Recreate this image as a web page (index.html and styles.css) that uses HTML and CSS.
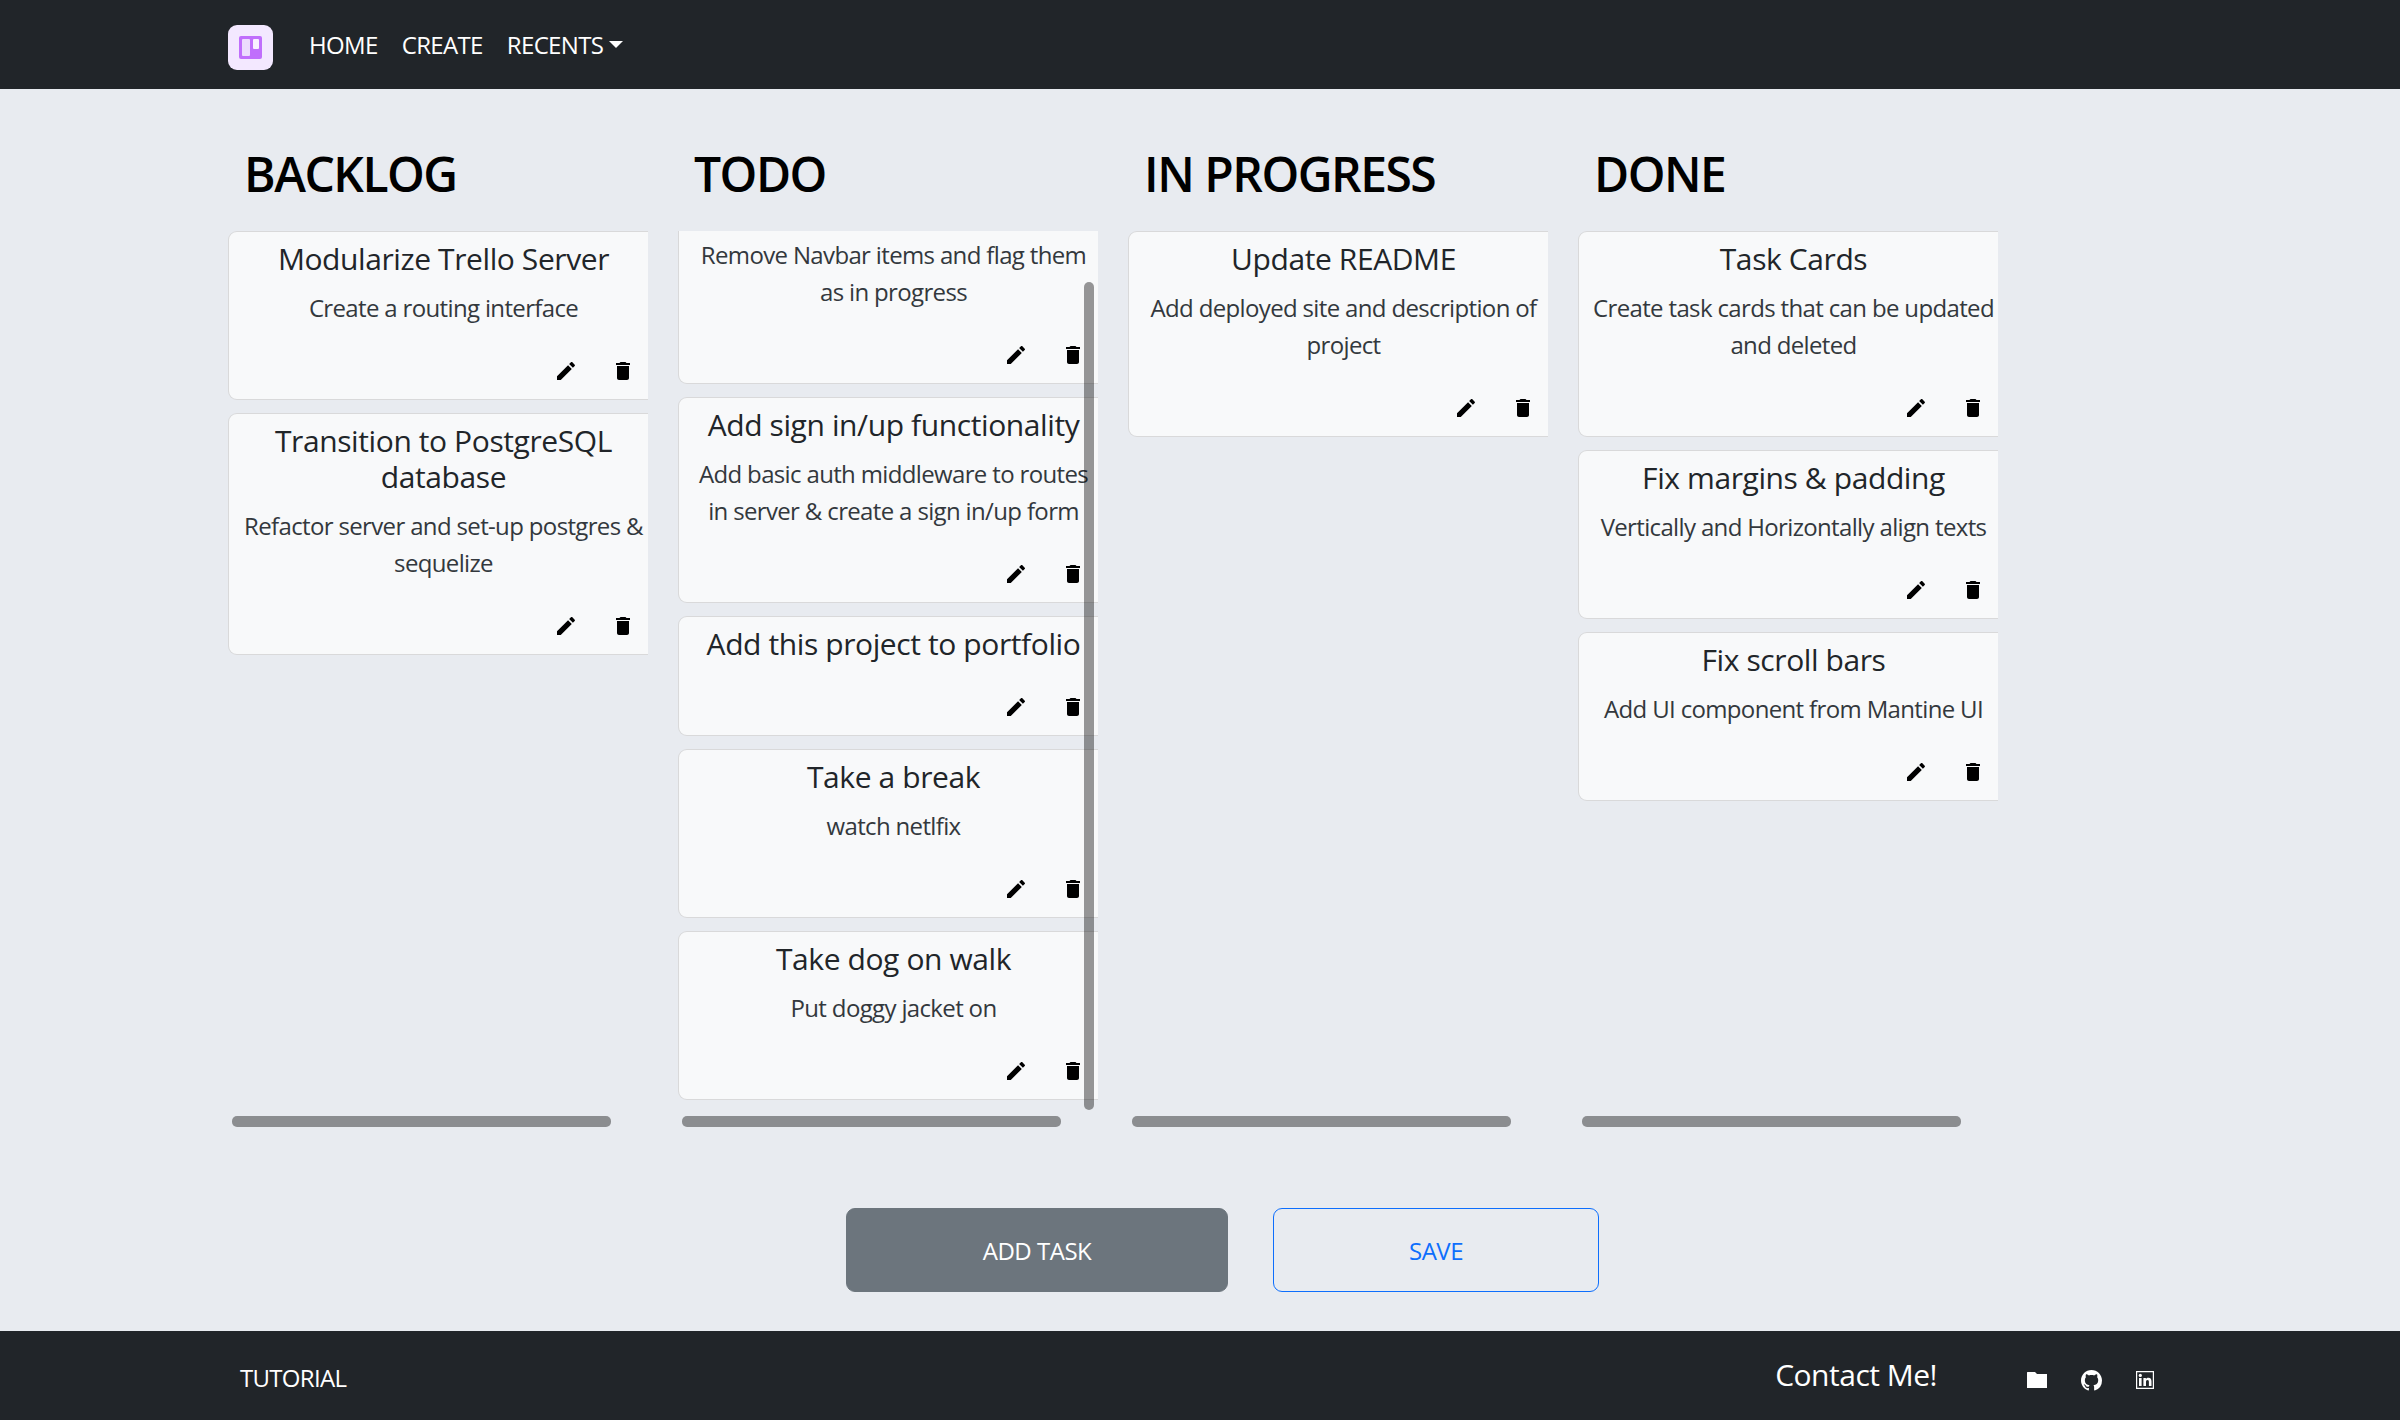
FILE: index.html
```html
<!DOCTYPE html>
<html lang="en">
<head>
  <meta charset="UTF-8" />
  <meta name="viewport" content="width=device-width, initial-scale=1.0" />
  <title>Trello Board</title>
  <link rel="stylesheet" href="styles.css">
</head>
<body>
  <svg class="icon-defs" aria-hidden="true">
    <symbol id="i-edit" viewBox="0 0 24 24"><path d="M3 17.25V21h3.75L17.81 9.94l-3.75-3.75L3 17.25zM20.71 7.04c.39-.39.39-1.02 0-1.41l-2.34-2.34c-.39-.39-1.02-.39-1.41 0l-1.83 1.83 3.75 3.75 1.83-1.83z"/></symbol>
    <symbol id="i-trash" viewBox="0 0 24 24"><path d="M6 19c0 1.1.9 2 2 2h8c1.1 0 2-.9 2-2V7H6v12zM19 4h-3.5l-1-1h-5l-1 1H5v2h14V4z"/></symbol>
  </svg>

  <nav class="navbar">
    <svg class="logo" viewBox="0 0 45 45">
      <rect width="45" height="45" rx="9" fill="#f3e8ff"/>
      <rect x="11" y="11" width="23" height="23" rx="2" fill="#c06efc"/>
      <rect x="14" y="14" width="8" height="17" rx="1" fill="#ecdcfd"/>
      <rect x="25" y="14" width="6" height="10" rx="1" fill="#f8f0ff"/>
    </svg>
    <a class="nav-link" href="#">HOME</a>
    <a class="nav-link" href="#">CREATE</a>
    <a class="nav-link dropdown-toggle" href="#">RECENTS</a>
  </nav>

  <main class="board">
    <section class="column">
      <h2 class="column-title">BACKLOG</h2>
      <div class="task-list">
        <article class="task">
          <h5 class="task-title">Modularize Trello Server</h5>
          <p class="task-desc">Create a routing interface</p>
          <div class="task-actions">
            <svg class="icon"><use href="#i-edit"/></svg>
            <svg class="icon"><use href="#i-trash"/></svg>
          </div>
        </article>
        <article class="task">
          <h5 class="task-title">Transition to PostgreSQL database</h5>
          <p class="task-desc">Refactor server and set-up postgres &amp; sequelize</p>
          <div class="task-actions">
            <svg class="icon"><use href="#i-edit"/></svg>
            <svg class="icon"><use href="#i-trash"/></svg>
          </div>
        </article>
      </div>
      <div class="hbar"></div>
    </section>

    <section class="column">
      <h2 class="column-title">TODO</h2>
      <div class="task-list">
        <!-- list is scrolled, top of this card is out of view -->
        <article class="task task-cut">
          <p class="task-desc">Remove Navbar items and flag them as in progress</p>
          <div class="task-actions">
            <svg class="icon"><use href="#i-edit"/></svg>
            <svg class="icon"><use href="#i-trash"/></svg>
          </div>
        </article>
        <article class="task">
          <h5 class="task-title">Add sign in/up functionality</h5>
          <p class="task-desc">Add basic auth middleware to routes in server &amp; create a sign in/up form</p>
          <div class="task-actions">
            <svg class="icon"><use href="#i-edit"/></svg>
            <svg class="icon"><use href="#i-trash"/></svg>
          </div>
        </article>
        <article class="task">
          <h5 class="task-title">Add this project to portfolio</h5>
          <p class="task-desc"></p>
          <div class="task-actions">
            <svg class="icon"><use href="#i-edit"/></svg>
            <svg class="icon"><use href="#i-trash"/></svg>
          </div>
        </article>
        <article class="task">
          <h5 class="task-title">Take a break</h5>
          <p class="task-desc">watch netlfix</p>
          <div class="task-actions">
            <svg class="icon"><use href="#i-edit"/></svg>
            <svg class="icon"><use href="#i-trash"/></svg>
          </div>
        </article>
        <article class="task">
          <h5 class="task-title">Take dog on walk</h5>
          <p class="task-desc">Put doggy jacket on</p>
          <div class="task-actions">
            <svg class="icon"><use href="#i-edit"/></svg>
            <svg class="icon"><use href="#i-trash"/></svg>
          </div>
        </article>
      </div>
      <div class="vbar"></div>
      <div class="hbar"></div>
    </section>

    <section class="column">
      <h2 class="column-title">IN PROGRESS</h2>
      <div class="task-list">
        <article class="task">
          <h5 class="task-title">Update README</h5>
          <p class="task-desc">Add deployed site and description of project</p>
          <div class="task-actions">
            <svg class="icon"><use href="#i-edit"/></svg>
            <svg class="icon"><use href="#i-trash"/></svg>
          </div>
        </article>
      </div>
      <div class="hbar"></div>
    </section>

    <section class="column">
      <h2 class="column-title">DONE</h2>
      <div class="task-list">
        <article class="task">
          <h5 class="task-title">Task Cards</h5>
          <p class="task-desc">Create task cards that can be updated and deleted</p>
          <div class="task-actions">
            <svg class="icon"><use href="#i-edit"/></svg>
            <svg class="icon"><use href="#i-trash"/></svg>
          </div>
        </article>
        <article class="task">
          <h5 class="task-title">Fix margins &amp; padding</h5>
          <p class="task-desc">Vertically and Horizontally align texts</p>
          <div class="task-actions">
            <svg class="icon"><use href="#i-edit"/></svg>
            <svg class="icon"><use href="#i-trash"/></svg>
          </div>
        </article>
        <article class="task">
          <h5 class="task-title">Fix scroll bars</h5>
          <p class="task-desc">Add UI component from Mantine UI</p>
          <div class="task-actions">
            <svg class="icon"><use href="#i-edit"/></svg>
            <svg class="icon"><use href="#i-trash"/></svg>
          </div>
        </article>
      </div>
      <div class="hbar"></div>
    </section>
  </main>

  <div class="button-row">
    <button class="btn btn-add">ADD TASK</button>
    <button class="btn btn-save">SAVE</button>
  </div>

  <footer class="footer">
    <a class="footer-link" href="#">TUTORIAL</a>
    <span class="contact">Contact Me!</span>
    <div class="footer-icons">
      <svg class="footer-icon" viewBox="0 0 24 24"><path d="M10 4H2.4L2 4.4V20h20V6H12z"/></svg>
      <svg class="footer-icon footer-icon-git" viewBox="0 0 16 16"><path d="M8 0C3.58 0 0 3.58 0 8c0 3.54 2.29 6.53 5.47 7.59.4.07.55-.17.55-.38 0-.19-.01-.82-.01-1.49-2.01.37-2.53-.49-2.69-.94-.09-.23-.48-.94-.82-1.13-.28-.15-.68-.52-.01-.53.63-.01 1.08.58 1.23.82.72 1.21 1.87.87 2.33.66.07-.52.28-.87.51-1.07-1.78-.2-3.64-.89-3.64-3.95 0-.87.31-1.59.82-2.15-.08-.2-.36-1.02.08-2.12 0 0 .67-.21 2.2.82.64-.18 1.32-.27 2-.27.68 0 1.36.09 2 .27 1.53-1.04 2.2-.82 2.2-.82.44 1.1.16 1.92.08 2.12.51.56.82 1.27.82 2.15 0 3.07-1.87 3.75-3.65 3.95.29.25.54.73.54 1.48 0 1.07-.01 1.93-.01 2.2 0 .21.15.46.55.38A8.012 8.012 0 0 0 16 8c0-4.42-3.58-8-8-8z"/></svg>
      <svg class="footer-icon" viewBox="0 0 24 24">
        <path fill-rule="evenodd" d="M3 3h18v18H3zM4.2 4.2v15.6h15.6V4.2z"/>
        <rect x="6" y="10" width="2.6" height="8"/>
        <circle cx="7.3" cy="7.4" r="1.6"/>
        <path d="M10.4 10h2.5v1.2c.5-.9 1.5-1.4 2.6-1.4 2.2 0 3 1.5 3 3.6V18h-2.6v-4.1c0-1-.3-1.9-1.4-1.9s-1.5.9-1.5 1.9V18h-2.6z"/>
      </svg>
    </div>
  </footer>
</body>
</html>
```

FILE: styles.css
```css
body {
  margin: 0;
  height: 100vh;
  display: flex;
  flex-direction: column;
  overflow: hidden;
  background-color: #e8ebf0;
  font-family: "Open Sans", "Noto Sans", sans-serif;
  font-size: 24px;
  color: #212529;
}
.icon-defs {
  display: none;
}

.navbar {
  height: 89px;
  flex-shrink: 0;
  display: flex;
  align-items: center;
  padding-left: 228px;
  background-color: #212529;
}
.logo {
  width: 45px;
  height: 45px;
  margin: 6px 36px 0 0;
}
.nav-link {
  margin-right: 24px;
  color: white;
  text-decoration: none;
  letter-spacing: -0.65px;
}
.dropdown-toggle {
  display: flex;
  align-items: center;
}
.dropdown-toggle::after {
  content: "";
  margin-left: 6px;
  border-top: 7px solid white;
  border-left: 7px solid transparent;
  border-right: 7px solid transparent;
}

.board {
  display: flex;
  gap: 30px;
  padding: 56px 0 0 228px;
}
.column {
  position: relative;
  width: 420px;
}
.column-title {
  margin: 0 0 28px 16px;
  font-size: 48px;
  font-weight: 600;
  line-height: 58px;
  letter-spacing: -1.5px;
  color: black;
}
.task-list {
  height: 879px;
  overflow: hidden;
  display: flex;
  flex-direction: column;
  gap: 13px;
}
.task {
  width: 431px;
  flex-shrink: 0;
  box-sizing: border-box;
  padding: 9px 0 6px;
  border: 1px solid rgba(0,0,0,0.125);
  border-radius: 9px;
  background-color: #f8f9fa;
  text-align: center;
}
.task-cut {
  padding-top: 5px;
  border-top: none;
  border-top-left-radius: 0;
  border-top-right-radius: 0;
}
.task-title {
  margin: 0 6px 12px;
  font-size: 30px;
  font-weight: 500;
  line-height: 36px;
  letter-spacing: -0.4px;
}
.task-desc {
  margin: 0 0 23px;
  padding: 0 10px;
  line-height: 37px;
  letter-spacing: -0.65px;
  color: #33383d;
}
.task-actions {
  height: 44px;
  display: flex;
  align-items: center;
  justify-content: flex-end;
  gap: 33px;
  padding-right: 23px;
}
.icon {
  width: 24px;
  height: 24px;
  fill: black;
}

/* scrollbars sit over the lists */
.vbar {
  position: absolute;
  top: 137px;
  left: 406px;
  width: 10px;
  height: 828px;
  border-radius: 5px;
  background-color: rgba(0,0,0,0.4);
}
.hbar {
  position: absolute;
  top: 971px;
  left: 4px;
  width: 379px;
  height: 11px;
  border-radius: 5px;
  background-color: rgba(0,0,0,0.4);
}

.button-row {
  display: flex;
  gap: 45px;
  margin: 0 0 0 846px;
  padding-top: 98px;
}
.btn {
  height: 84px;
  border-radius: 9px;
  font-family: inherit;
  font-size: 24px;
  letter-spacing: -0.5px;
}
.btn-add {
  width: 382px;
  border: 1px solid #6c757d;
  background-color: #6c757d;
  color: white;
}
.btn-save {
  width: 326px;
  border: 1.5px solid #0d6efd;
  background: transparent;
  color: #0d6efd;
}

.footer {
  height: 89px;
  margin-top: auto;
  flex-shrink: 0;
  display: flex;
  align-items: center;
  padding: 0 243px 0 240px;
  background-color: #212529;
  color: white;
}
.footer-link {
  color: white;
  text-decoration: none;
  letter-spacing: -0.7px;
  margin-top: 3px;
}
.contact {
  margin: 0 0 3px auto;
  font-size: 30px;
  letter-spacing: -0.5px;
}
.footer-icons {
  display: flex;
  align-items: center;
  gap: 31.5px;
  margin: 9px 0 0 88px;
}
.footer-icon {
  width: 24px;
  height: 24px;
  fill: white;
}
.footer-icon-git {
  width: 21px;
  height: 21px;
}
```
